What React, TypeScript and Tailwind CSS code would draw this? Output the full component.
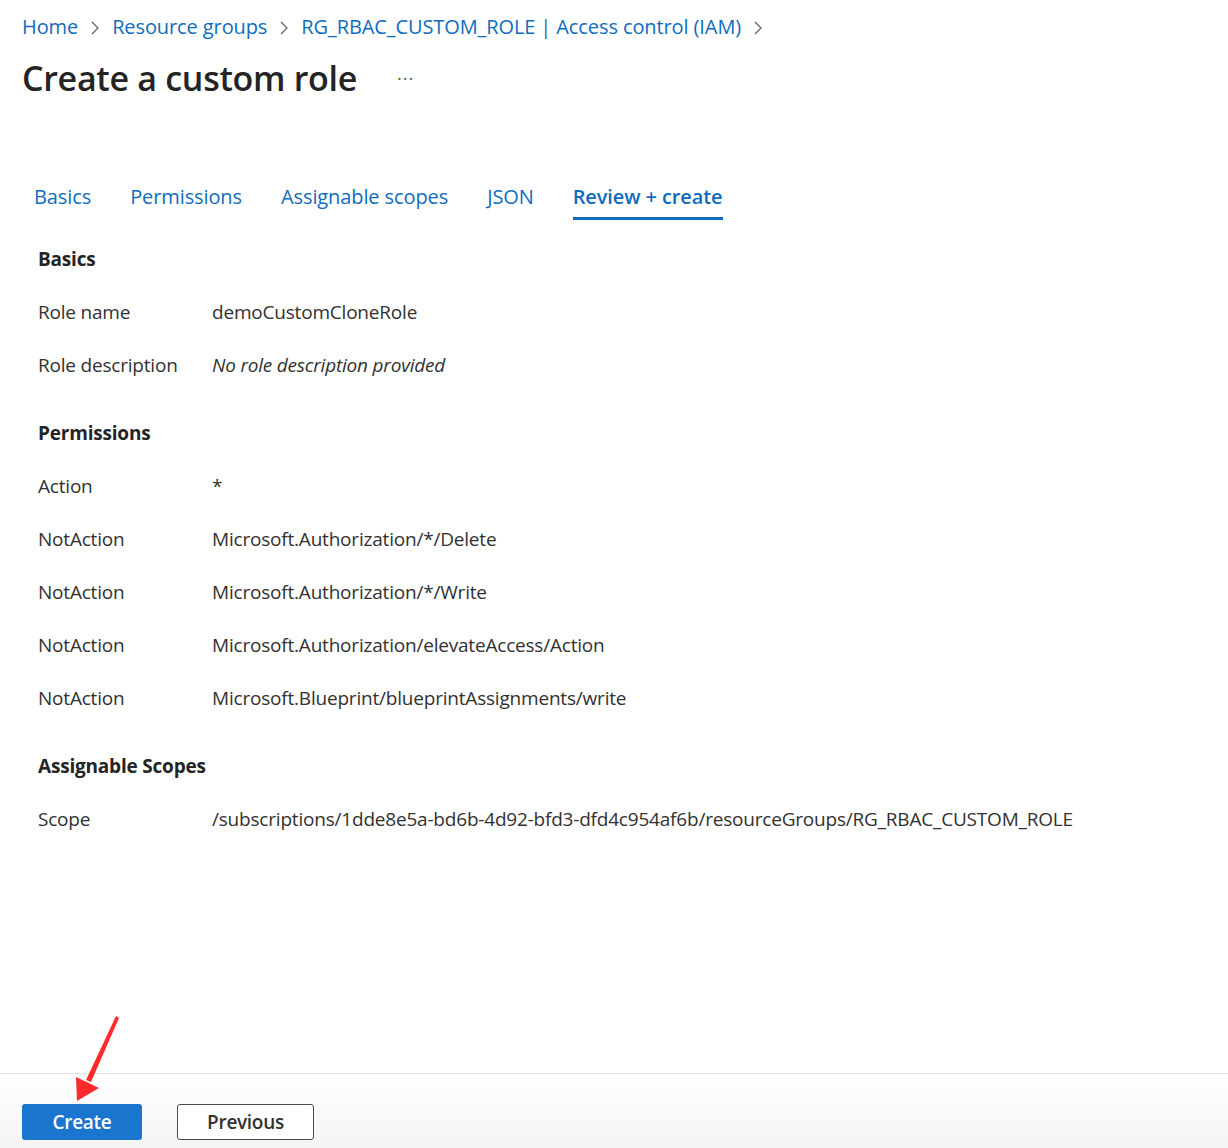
import React from 'react';

const tabs = ['Basics', 'Permissions', 'Assignable scopes', 'JSON', 'Review + create'];

const sections = [
  {
    title: 'Basics',
    rows: [
      { label: 'Role name', value: 'demoCustomCloneRole' },
      { label: 'Role description', value: 'No role description provided', italic: true },
    ],
  },
  {
    title: 'Permissions',
    rows: [
      { label: 'Action', value: '*' },
      { label: 'NotAction', value: 'Microsoft.Authorization/*/Delete' },
      { label: 'NotAction', value: 'Microsoft.Authorization/*/Write' },
      { label: 'NotAction', value: 'Microsoft.Authorization/elevateAccess/Action' },
      { label: 'NotAction', value: 'Microsoft.Blueprint/blueprintAssignments/write' },
    ],
  },
  {
    title: 'Assignable Scopes',
    rows: [
      {
        label: 'Scope',
        value: '/subscriptions/1dde8e5a-bd6b-4d92-bfd3-dfd4c954af6b/resourceGroups/RG_RBAC_CUSTOM_ROLE',
      },
    ],
  },
];

function Chevron() {
  return (
    <svg width="10" height="16" viewBox="0 0 10 16" className="mx-[12px] mt-[2px]">
      <path d="M2 2 L8 8 L2 14" fill="none" stroke="#605e5c" strokeWidth="1.2" />
    </svg>
  );
}

export default function App() {
  return (
    <div
      className="relative flex flex-col w-[1228px] h-[1148px] bg-white text-[#323130] overflow-hidden"
      style={{ fontFamily: '"Open Sans", "Noto Sans", sans-serif' }}
    >
      {/* Header */}
      <div className="px-[22px] pt-[13px]">
        <nav className="flex items-center text-[20px] leading-[28px] text-[#0f6cbd] tracking-[-0.1px]">
          <span>Home</span>
          <Chevron />
          <span>Resource groups</span>
          <Chevron />
          <span>RG_RBAC_CUSTOM_ROLE | Access control (IAM)</span>
          <Chevron />
        </nav>
        <div className="flex items-center mt-[15px]">
          <h1 className="text-[34px] leading-[44px] font-semibold text-[#242424] tracking-[-0.3px]">
            Create a custom role
          </h1>
          <span className="ml-[40px] text-[18px] text-[#605e5c] tracking-[1px] -mt-[10px]">...</span>
        </div>
      </div>

      {/* Tabs */}
      <div className="flex items-end gap-[39px] px-[34px] mt-[83px]">
        {tabs.map((t) => {
          const active = t === 'Review + create';
          return (
            <div key={t} className="flex flex-col">
              <span
                className={`text-[20px] leading-[28px] text-[#0f6cbd] tracking-[-0.1px] ${active ? 'font-semibold' : ''}`}
              >
                {t}
              </span>
              <div className={`h-[3px] mt-[6px] ${active ? 'bg-[#0f6cbd]' : 'bg-transparent'}`} />
            </div>
          );
        })}
      </div>

      {/* Content */}
      <div className="flex flex-col px-[38px] pt-[26px]">
        {sections.map((s) => (
          <div key={s.title} className="flex flex-col mb-[15px]">
            <div className="text-[19px] leading-[26px] font-bold text-[#242424] tracking-[-0.2px] mb-[27px]">
              {s.title}
            </div>
            {s.rows.map((r, i) => (
              <div key={i} className="flex text-[19px] leading-[26px] tracking-[-0.2px] mb-[27px]">
                <div className="w-[174px] shrink-0">{r.label}</div>
                <div className={r.italic ? 'italic' : ''}>{r.value}</div>
              </div>
            ))}
          </div>
        ))}
      </div>

      {/* Footer */}
      <div className="mt-auto h-[75px] border-t border-[#e0e0e0] bg-gradient-to-b from-white to-[#f4f4f4] flex items-start gap-[35px] px-[22px] pt-[30px]">
        <button className="w-[120px] h-[36px] rounded-[3px] bg-[#1a75cf] text-white text-[19px] font-semibold tracking-[-0.3px]">
          Create
        </button>
        <button className="w-[137px] h-[36px] rounded-[3px] border border-[#4a4a4a] bg-white text-[#323130] text-[19px] font-semibold tracking-[-0.3px]">
          Previous
        </button>
      </div>

      {/* Annotation arrow */}
      <svg className="absolute left-0 top-0 pointer-events-none" width="1228" height="1148">
        <polygon points="116,1016 119,1018 91,1082 86,1080" fill="#ff2a2a" />
        <polygon points="77,1101 76,1077 99,1088" fill="#ff2a2a" />
      </svg>
    </div>
  );
}
